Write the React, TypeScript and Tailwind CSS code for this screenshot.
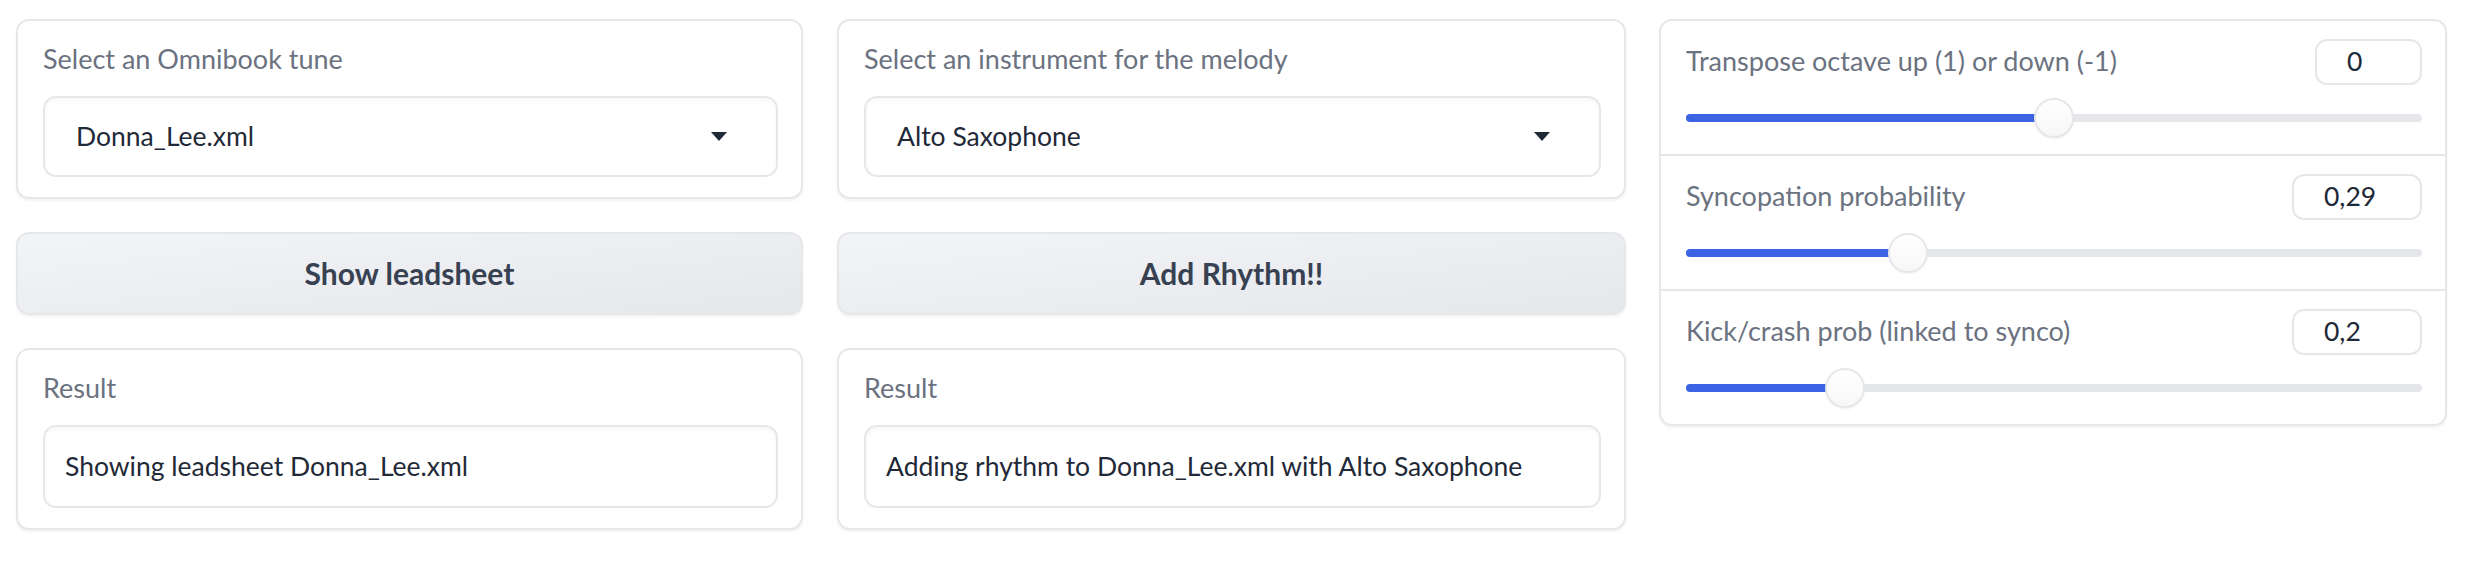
const fontStack = "font-['Lato','Noto_Sans',sans-serif]";

function Card({ children, className = "" }: { children: React.ReactNode; className?: string }) {
  return (
    <div
      className={`rounded-[13px] border-2 border-[#e5e7eb] bg-white shadow-[0_2px_3px_rgba(0,0,0,0.05)] ${className}`}
    >
      {children}
    </div>
  );
}

function Label({ text }: { text: string }) {
  return <div className="text-[27px] leading-[35px] text-[#6b7280]">{text}</div>;
}

function Dropdown({ value }: { value: string }) {
  return (
    <div className="flex h-[81px] items-center justify-between rounded-[13px] border-2 border-[#e5e7eb] bg-white pl-[31px] pr-[49px] text-[26.5px] text-[#1f2937] shadow-[inset_0_2px_4px_rgba(0,0,0,0.04)]">
      <span>{value}</span>
      <svg width="16" height="9" viewBox="0 0 16 9">
        <polygon points="0,0 16,0 8,9" fill="#1f2937" />
      </svg>
    </div>
  );
}

function TextBox({ value }: { value: string }) {
  return (
    <div className="flex h-[83px] items-center rounded-[13px] border-2 border-[#e5e7eb] bg-white pl-[20px] text-[26.5px] text-[#1f2937] shadow-[inset_0_2px_4px_rgba(0,0,0,0.04)]">
      {value}
    </div>
  );
}

function Button({ text }: { text: string }) {
  return (
    <div className="flex h-[83px] items-center justify-center rounded-[13px] border-2 border-[#e5e7eb] bg-gradient-to-br from-[#f3f4f6] to-[#e5e7eb] text-[30px] font-bold text-[#374151] shadow-[0_2px_3px_rgba(0,0,0,0.05)]">
      {text}
    </div>
  );
}

function SliderRow({
  label,
  value,
  frac,
  boxWidth,
}: {
  label: string;
  value: string;
  frac: number;
  boxWidth: string;
}) {
  return (
    <div className="pb-[16px] pl-[25px] pr-[23px] pt-[18px]">
      <div className="flex items-start justify-between">
        <div className="pt-[4px]">
          <Label text={label} />
        </div>
        <div
          className={`flex h-[46px] items-center rounded-[12px] border-2 border-[#e5e7eb] bg-white pl-[30px] text-[26.5px] text-[#1f2937] ${boxWidth}`}
        >
          {value}
        </div>
      </div>
      <div className="relative mt-[13px] h-[40px]">
        <div className="absolute left-0 right-0 top-[16px] h-[8px] rounded-full bg-[#e5e7eb]" />
        <div
          className="absolute left-0 top-[16px] h-[8px] rounded-full bg-[#3b63e3]"
          style={{ width: `calc(${frac} * (100% - 40px) + 20px)` }}
        />
        <div
          className="absolute top-0 h-[40px] w-[40px] rounded-full border-2 border-[#e5e7eb] bg-gradient-to-b from-white to-[#f7f7f8] shadow-[0_1px_2px_rgba(0,0,0,0.06)]"
          style={{ left: `calc(${frac} * (100% - 40px))` }}
        />
      </div>
    </div>
  );
}

export default function App() {
  return (
    <div className={`min-h-screen bg-white pl-[16px] pt-[19px] ${fontStack}`}>
      <div className="flex items-start">
        <div className="flex w-[787px] flex-col gap-[33px]">
          <Card className="pb-[20px] pl-[25px] pr-[23px] pt-[20px]">
            <Label text="Select an Omnibook tune" />
            <div className="mt-[20px]">
              <Dropdown value="Donna_Lee.xml" />
            </div>
          </Card>
          <Button text="Show leadsheet" />
          <Card className="pb-[20px] pl-[25px] pr-[23px] pt-[20px]">
            <Label text="Result" />
            <div className="mt-[20px]">
              <TextBox value="Showing leadsheet Donna_Lee.xml" />
            </div>
          </Card>
        </div>

        <div className="ml-[34px] flex w-[789px] flex-col gap-[33px]">
          <Card className="pb-[20px] pl-[25px] pr-[23px] pt-[20px]">
            <Label text="Select an instrument for the melody" />
            <div className="mt-[20px]">
              <Dropdown value="Alto Saxophone" />
            </div>
          </Card>
          <Button text="Add Rhythm!!" />
          <Card className="pb-[20px] pl-[25px] pr-[23px] pt-[20px]">
            <Label text="Result" />
            <div className="mt-[20px]">
              <TextBox value="Adding rhythm to Donna_Lee.xml with Alto Saxophone" />
            </div>
          </Card>
        </div>

        <Card className="ml-[33px] w-[788px] divide-y-2 divide-[#e5e7eb]">
          <SliderRow label="Transpose octave up (1) or down (-1)" value="0" frac={0.5} boxWidth="w-[107px]" />
          <SliderRow label="Syncopation probability" value="0,29" frac={0.29} boxWidth="w-[130px]" />
          <SliderRow label="Kick/crash prob (linked to synco)" value="0,2" frac={0.2} boxWidth="w-[130px]" />
        </Card>
      </div>
    </div>
  );
}
